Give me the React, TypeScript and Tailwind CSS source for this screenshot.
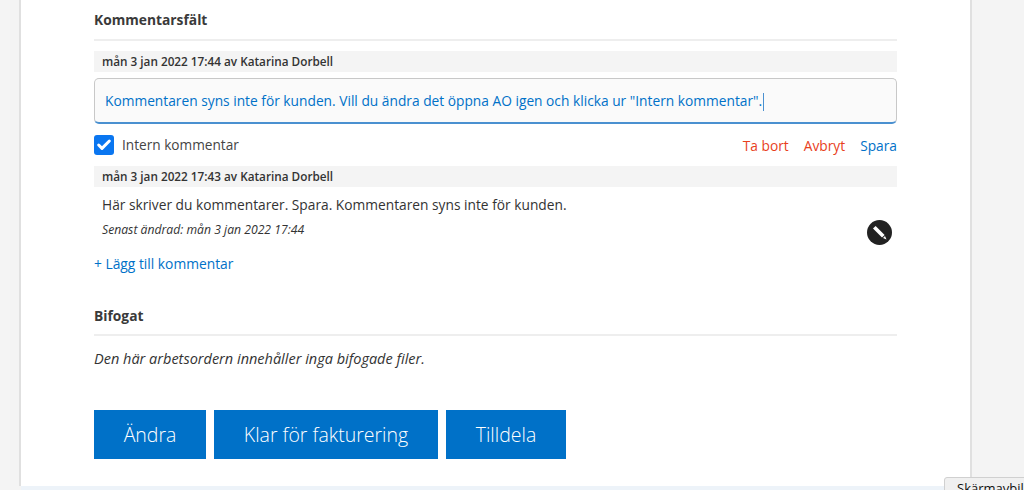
import { Check } from "lucide-react";

function DateBar({ text }: { text: string }) {
    return (
        <div className="h-[21px] bg-[#f4f4f4] px-2 text-[11.75px] leading-[21px] font-semibold text-[#333]">
            {text}
        </div>
    );
}

function ActionButton({ label, width }: { label: string; width: string }) {
    return (
        <button className={`h-[49px] bg-[#0071c8] text-center text-[19.5px] font-light text-white ${width}`}>
            {label}
        </button>
    );
}

function PencilIcon() {
    return (
        <svg width="25" height="25" viewBox="0 0 25 25" className="block">
            <circle cx="12.5" cy="12.5" r="12.5" fill="#222222" />
            <path d="M6 8.6 L8.6 6 L17.6 15 L15 17.6 Z" fill="#ffffff" />
            <path d="M16 18 L18 16 L19.5 19.5 Z" fill="#ffffff" />
        </svg>
    );
}

export default function App() {
    return (
        <div className="relative flex h-[490px] w-[1024px] flex-col overflow-hidden bg-[#f4f4f4] font-['Open_Sans',sans-serif]">
            <div className="ml-[19px] flex w-[953px] flex-1 flex-col border-x-2 border-[#e0e0e0] bg-white px-[73px] pt-[10px]">
                <h2 className="text-[13.8px] leading-[19px] font-bold text-[#3a3a3a]">Kommentarsfält</h2>
                <div className="mt-[10px] h-[2px] bg-[#eeeeee]" />

                <div className="mt-[10px]">
                    <DateBar text="mån 3 jan 2022 17:44 av Katarina Dorbell" />
                </div>
                <div className="mt-[6px] flex h-[46px] items-center rounded-[5px] border border-b-2 border-[#c8c8c8] border-b-[#4a90d0] bg-[#fafafa] px-[10px] pt-[2px] text-[13.75px] text-[#0071c8]">
                    <span>Kommentaren syns inte för kunden. Vill du ändra det öppna AO igen och klicka ur "Intern kommentar".</span>
                    <span className="ml-px h-[18px] w-px bg-[#4a90d0]" />
                </div>

                <div className="mt-[11px] flex h-[20px] items-center justify-between">
                    <label className="flex items-center gap-2 text-[13.65px] text-[#444]">
                        <span className="flex h-[20px] w-[20px] items-center justify-center rounded-[3px] bg-[#0a76f0]">
                            <Check size={16} strokeWidth={4.5} className="text-white" />
                        </span>
                        Intern kommentar
                    </label>
                    <div className="flex gap-[15px] pt-[2px] text-[13.75px]">
                        <span className="text-[#e8401c]">Ta bort</span>
                        <span className="text-[#e8401c]">Avbryt</span>
                        <span className="text-[#0071c8]">Spara</span>
                    </div>
                </div>

                <div className="mt-[11px]">
                    <DateBar text="mån 3 jan 2022 17:43 av Katarina Dorbell" />
                </div>
                <div className="flex items-end justify-between pr-[5px] pl-2">
                    <div>
                        <p className="mt-[8px] text-[13.75px] leading-[19px] text-[#333]">
                            Här skriver du kommentarer. Spara. Kommentaren syns inte för kunden.
                        </p>
                        <p className="mt-[7px] text-[12.2px] leading-[17px] text-[#333] italic">
                            Senast ändrad: mån 3 jan 2022 17:44
                        </p>
                    </div>
                    <span className="mb-[-7px]">
                        <PencilIcon />
                    </span>
                </div>

                <div className="mt-[16px] text-[13.8px] leading-[19px] text-[#0071c8]">+ Lägg till kommentar</div>

                <h2 className="mt-[33px] text-[13.8px] leading-[19px] font-bold text-[#3a3a3a]">Bifogat</h2>
                <div className="mt-[9px] h-[2px] bg-[#eeeeee]" />
                <p className="mt-[13px] text-[14.5px] leading-[19px] text-[#333] italic">
                    Den här arbetsordern innehåller inga bifogade filer.
                </p>

                <div className="mt-[42px] flex gap-2">
                    <ActionButton label="Ändra" width="w-[112px]" />
                    <ActionButton label="Klar för fakturering" width="w-[224px]" />
                    <ActionButton label="Tilldela" width="w-[120px]" />
                </div>
            </div>
            <div className="ml-[21px] h-[4px] w-[949px] bg-[#edf3f9]" />

            <div className="absolute top-[477px] left-[944px] h-[30px] w-[100px] rounded-t-[3px] border border-[#d0d0d0] bg-[#f0f0f0] pl-[12px] text-[13px] leading-[20px] text-[#111]">
                Skärmavbild
            </div>
        </div>
    );
}
